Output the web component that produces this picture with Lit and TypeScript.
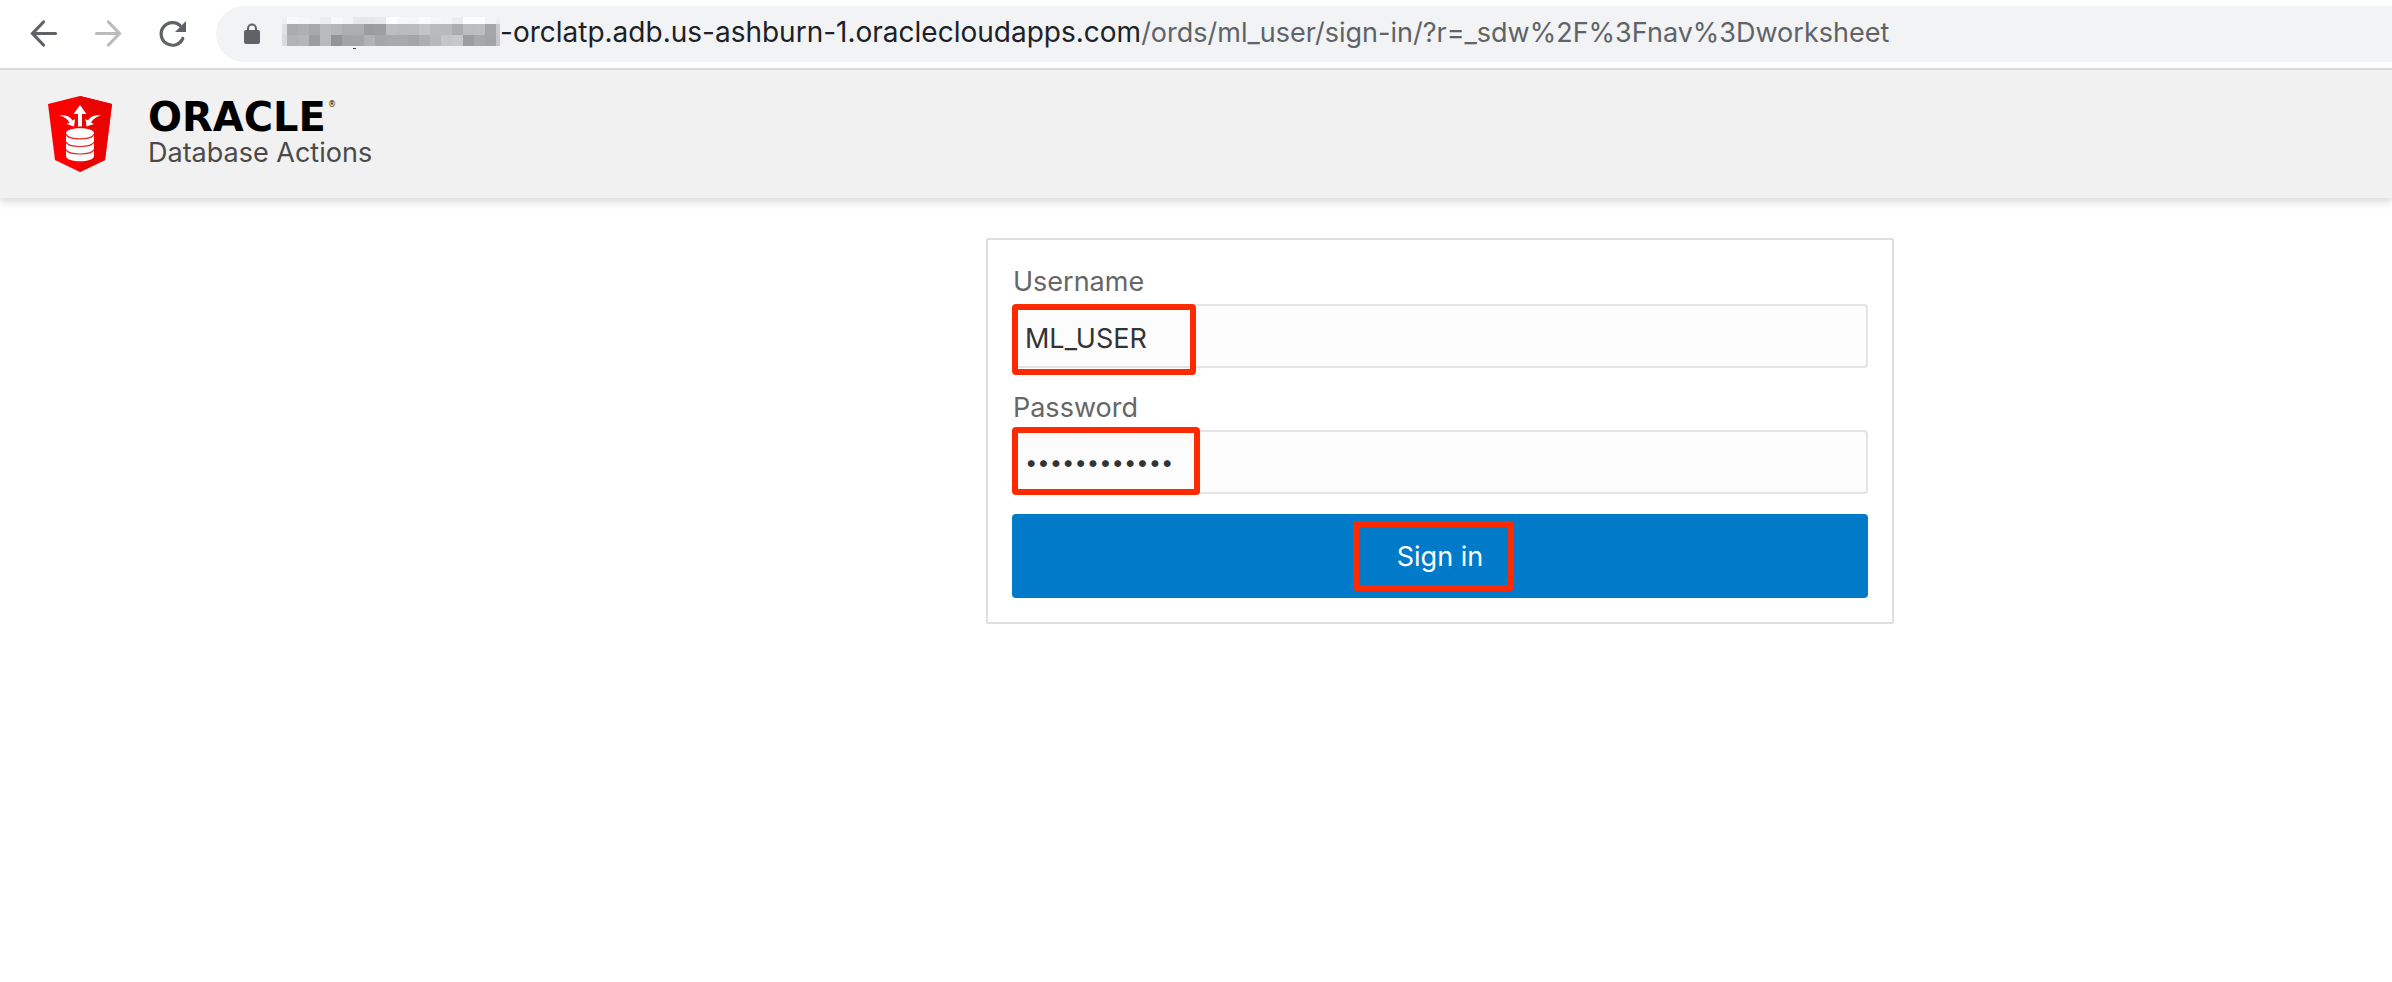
import { LitElement, html, svg, css } from "lit";
import { customElement } from "lit/decorators.js";

// Grey levels of the masked part of the host name, one row of 11px cells each.
const MASK_ROWS: { y: number; h: number; edge: [string, string]; cells: string[] }[] = [
  { y: 0, h: 7, edge: ["#eeefef", "#edeff0"],
    cells: "f8fafb f4f6f7 f2f4f5 e9eeef f6f8f9 f1f3f4 e6e8e8 e6e8e8 e8eaea fcfdfd f6f8f9 f4f6f8 fafbfb f4f6f8 f2f4f6 eaecee fcfdfe fcfdfe f2f4f5".split(" ") },
  { y: 7, h: 11, edge: ["#dfe1e1", "#c9cacb"],
    cells: "aaabac afb0b1 a7a8a9 b9babb b4b5b6 adaeaf adaeaf 9b9c9e 9d9ea0 bdbebf babbbc bbbcbe c3c4c5 b9babb b8b9ba abacad bcbdbe bdbebf a4a5a6".split(" ") },
  { y: 18, h: 11, edge: ["#d9dadb", "#c5c6c7"],
    cells: "b2b3b4 b5b6b7 9c9d9f b9babb 939496 a2a3a4 a4a5a6 b1b2b3 a6a7a8 a8a9aa a8a9aa a4a5a6 adaeaf b7b8b9 c4c5c6 c7c8c9 9c9d9f a7a8a9 a3a4a5".split(" ") },
];

@customElement("browser-bar")
export class BrowserBar extends LitElement {
  static styles = css`
    :host { display: block; }
    .bar { display: flex; align-items: center; height: 60px; padding: 4px 0; border-bottom: 2px solid #dadce0; background: #fff; overflow: hidden; }
    .nav { display: flex; gap: 24px; padding-left: 24px; }
    .nav-button { display: block; width: 40px; height: 40px; padding: 0; border: 0; background: none; color: #5f6368; }
    .nav-button[disabled] { color: #babcbe; }
    .address { display: flex; flex: 1; align-items: center; min-width: 0; height: 56px; margin-left: 24px; padding-left: 28px; border-radius: 28px 0 0 28px; background: #f1f3f4; box-sizing: border-box; }
    .lock { flex: none; width: 16px; height: 22px; margin-right: 22px; }
    .mask { flex: none; width: 218px; height: 34px; }
    .url { white-space: nowrap; font-size: 27px; line-height: 32px; padding-bottom: 4px; color: #5f6368; }
    .host { font-size: 28px; color: #202124; }
  `;

  render() {
    return html`
      <div class="bar">
        <nav class="nav" aria-label="Navigation">
          <button class="nav-button" aria-label="Back">
            <svg viewBox="0 0 40 40" fill="none" stroke="currentColor" stroke-width="3.2" stroke-linecap="round"><path d="M31.5 19.5H9M19.5 8 8.5 19.5 19.5 31" /></svg>
          </button>
          <button class="nav-button" aria-label="Forward" disabled>
            <svg viewBox="0 0 40 40" fill="none" stroke="currentColor" stroke-width="3.2" stroke-linecap="round"><path d="M8.5 19.5H31M20.5 8 31.5 19.5 20.5 31" /></svg>
          </button>
          <button class="nav-button" aria-label="Reload">
            <svg viewBox="0 0 40 40"><path d="M30.8 24.5A11.3 11.3 0 1 1 28 11.5" fill="none" stroke="currentColor" stroke-width="3.2" stroke-linecap="round" /><path d="M34 7V18H23Z" fill="currentColor" /></svg>
          </button>
        </nav>
        <div class="address">
          <svg class="lock" viewBox="0 0 16 22"><path d="M4 9V5.5a4 4 0 0 1 8 0V9" fill="none" stroke="#5f6368" stroke-width="2" /><rect y="7" width="16" height="14" rx="2" fill="#5f6368" /></svg>
          <svg class="mask" viewBox="0 0 218 34" shape-rendering="crispEdges">
            ${MASK_ROWS.map((row) => svg`
              <rect x="0" y=${row.y} width="5" height=${row.h} fill=${row.edge[0]} />
              ${row.cells.map((c, i) => svg`<rect x=${5 + i * 11} y=${row.y} width="11" height=${row.h} fill=${"#" + c} />`)}
              <rect x="214" y=${row.y} width="4" height=${row.h} fill=${row.edge[1]} />`)}
            <rect x="71" y="31" width="3" height="1" fill="#444" />
          </svg>
          <span class="url"><span class="host">-orclatp.adb.us-ashburn-1.oraclecloudapps.com</span>/ords/ml_user/sign-in/?r=_sdw%2F%3Fnav%3Dworksheet</span>
        </div>
      </div>
    `;
  }
}

@customElement("product-header")
export class ProductHeader extends LitElement {
  static styles = css`
    :host { display: block; }
    .header { display: flex; align-items: center; gap: 36px; height: 128px; padding: 0 48px; background: #f1f1f1; box-shadow: 0 4px 8px rgba(0, 0, 0, 0.15); box-sizing: border-box; }
    .shield { flex: none; width: 64px; height: 76px; }
    .brand { display: flex; flex-direction: column; padding-bottom: 2px; }
    .wordmark { display: flex; align-items: flex-start; gap: 2px; font-family: "DejaVu Sans", sans-serif; font-size: 40px; font-weight: 700; line-height: 40px; color: #000; }
    .mark { font-size: 8px; font-weight: 400; line-height: 16px; }
    .product { font-size: 27px; line-height: 32px; color: #4a4a4a; }
  `;

  render() {
    return html`
      <header class="header">
        <svg class="shield" viewBox="0 0 64 76" aria-hidden="true">
          <path d="M32 0 64 8 57 64 32 76 7 64 0 8Z" fill="#fe0000" />
          <path d="M32 0 64 8 57 64 32 76Z" fill="#ea0400" />
          <path d="M32 9 38.5 18H34V30.5H30V18H25.5Z" fill="#fff" />
          <path d="M11.5 19.5C18 18.5 22.5 21 24.5 24.5L27 23 26 30.5 18.5 28 21.5 26.5C19 22.5 16 20.5 11.5 19.5Z" fill="#fff" />
          <path d="M53 19.5C46.5 18.5 42 21 40 24.5L37.5 23 38.5 30.5 46 28 43 26.5C45.5 22.5 48.5 20.5 53 19.5Z" fill="#fff" />
          <path d="M18 37C18 30.5 46 30.5 46 37V60C46 67 18 67 18 60Z" fill="#fff" />
          <path d="M18 38C20 44.5 44 44.5 46 38M18 46C20 52 44 52 46 46M18 53.5C20 59.5 44 59.5 46 53.5" fill="none" stroke="#f02020" stroke-width="1.2" />
        </svg>
        <div class="brand">
          <span class="wordmark">ORACLE<span class="mark">®</span></span>
          <span class="product">Database Actions</span>
        </div>
      </header>
    `;
  }
}

@customElement("sign-in-form")
export class SignInForm extends LitElement {
  static styles = css`
    :host { display: block; width: 100%; max-width: 908px; }
    .card { display: flex; flex-direction: column; gap: 20px; padding: 22px 24px 24px; border: 2px solid #dfdfdf; border-radius: 2px; background: #fff; }
    .field { display: flex; flex-direction: column; gap: 2px; }
    .label { padding-left: 1px; font-size: 27px; line-height: 40px; color: #666; }
    .control { position: relative; display: flex; }
    .input { width: 100%; height: 64px; margin: 0; padding: 4px 11px 0; border: 2px solid #e4e4e4; border-radius: 4px; outline: 0; background: #fcfcfc; color: #333; font-family: inherit; font-size: 27px; box-sizing: border-box; }
    .input[type="password"] { padding: 4px 11px; font-size: 22px; }
    .submit { width: 100%; height: 84px; padding: 0; border: 0; border-radius: 4px; background: #007ac9; color: #fff; font-family: inherit; font-size: 27px; }
    .callout { position: absolute; border: 6px solid #ff2a00; border-radius: 4px; box-sizing: border-box; pointer-events: none; }
    .on-username { left: 0; top: 0; width: 184px; height: 71px; }
    .on-password { left: 0; top: -3px; width: 188px; height: 68px; }
    .on-submit { left: calc(50% - 87px); top: 7px; width: 161px; height: 70px; }
  `;

  render() {
    return html`
      <form class="card" @submit=${(e: Event) => e.preventDefault()}>
        <div class="field">
          <label class="label" for="username">Username</label>
          <div class="control">
            <input class="input" id="username" type="text" value="ML_USER" autocomplete="off" spellcheck="false" />
            <span class="callout on-username"></span>
          </div>
        </div>
        <div class="field">
          <label class="label" for="password">Password</label>
          <div class="control">
            <input class="input" id="password" type="password" value="abcdefghijkl" autocomplete="off" />
            <span class="callout on-password"></span>
          </div>
        </div>
        <div class="control">
          <button class="submit" type="submit">Sign in</button>
          <span class="callout on-submit"></span>
        </div>
      </form>
    `;
  }
}

@customElement("app-root")
export class AppRoot extends LitElement {
  static styles = css`
    :host { display: block; min-height: 100vh; background: #fff; font-family: Inter, "Liberation Sans", sans-serif; }
    .main { display: flex; justify-content: center; padding: 40px 0 40px 20.4%; }
  `;

  render() {
    return html`
      <browser-bar></browser-bar>
      <product-header></product-header>
      <main class="main"><sign-in-form></sign-in-form></main>
    `;
  }
}
